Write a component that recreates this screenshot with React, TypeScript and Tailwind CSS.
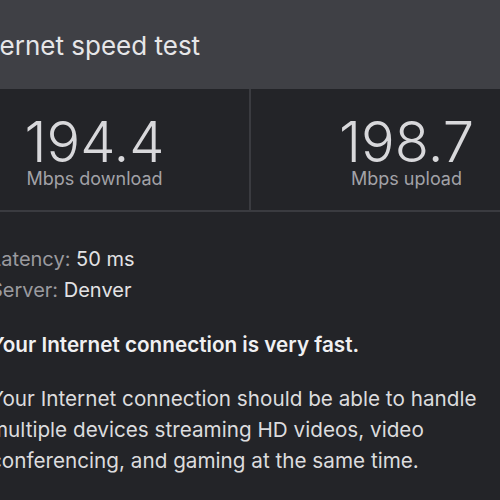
import React from "react";

export default function App() {
  return (
    <div className="w-[500px] h-[500px] overflow-hidden bg-[#232428]">
      <div className="w-[622px] ml-[-60px] font-['Inter',sans-serif]">
        <div className="h-[89px] bg-[#3f4045] px-[29px] pt-[29px]">
          <div className="text-[26px] leading-[34px] text-[#e6e6e8]">Internet speed test</div>
        </div>
        <div className="grid grid-cols-2 h-[123px] border-b-2 border-[#3a3b40]">
          <div className="flex flex-col items-center pt-[25px] border-r-2 border-[#3a3b40]">
            <div className="text-[56px] leading-[56px] font-light text-[#d8d8db]">194.4</div>
            <div className="text-[18px] leading-[20px] text-[#a2a2a7] mt-[-1px]">Mbps download</div>
          </div>
          <div className="flex flex-col items-center pt-[25px]">
            <div className="text-[56px] leading-[56px] font-light text-[#d8d8db]">198.7</div>
            <div className="text-[18px] leading-[20px] text-[#a2a2a7] mt-[-1px]">Mbps upload</div>
          </div>
        </div>
        <div className="px-[50px] pt-[32px] text-[20px] leading-[31px]">
          <div>
            <span className="text-[#9a9a9f]">Latency: </span>
            <span className="text-[#e2e2e4]">50 ms</span>
          </div>
          <div>
            <span className="text-[#9a9a9f]">Server: </span>
            <span className="text-[#e2e2e4]">Denver</span>
          </div>
          <div className="mt-[23px] text-[20.7px] font-semibold text-[#f0f0f2]">Your Internet connection is very fast.</div>
          <div className="mt-[23px] text-[20.7px] text-[#dcdcde] w-[520px]">
            Your Internet connection should be able to handle multiple devices streaming HD videos, video conferencing, and gaming at the same time.
          </div>
        </div>
      </div>
    </div>
  );
}
